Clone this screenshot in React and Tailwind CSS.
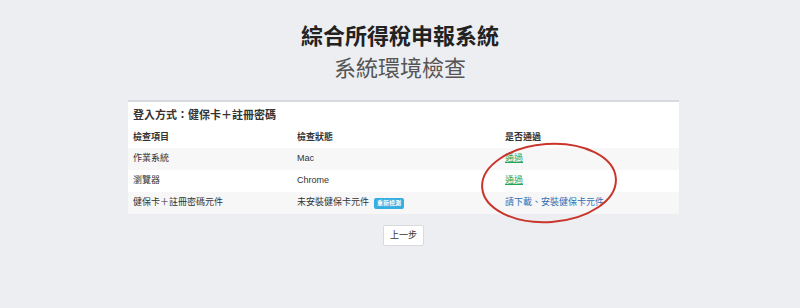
import React from 'react';

const rows = [
    { item: '作業系統', status: 'Mac', result: '通過', pass: true },
    { item: '瀏覽器', status: 'Chrome', result: '通過', pass: true },
    { item: '健保卡＋註冊密碼元件', status: '未安裝健保卡元件', result: '請下載、安裝健保卡元件', pass: false, retry: true },
];

const App = () => {
    return (
        <div className="min-h-[308px] bg-[#eceef1] pt-[21px] text-[#333] font-['Liberation_Sans','Noto_Sans_CJK_TC',sans-serif]">
            <h1 className="text-center text-[22px] font-bold leading-[32px] text-[#222]">綜合所得稅申報系統</h1>
            <h2 className="text-center text-[22px] leading-[32px] text-[#555]">系統環境檢查</h2>

            <div className="relative ml-[128px] mt-[15px] w-[551px] border-t-[2px] border-[#d6d9dd] bg-white">
                <div className="px-[5px] pt-[3px] h-[25px] text-[11px] font-semibold leading-[20px] text-[#333]">登入方式：健保卡＋註冊密碼</div>
                <div className="grid grid-cols-[164px_208px_1fr] h-[21px] items-center px-[5px] text-[9px] font-bold">
                    <div>檢查項目</div>
                    <div>檢查狀態</div>
                    <div>是否通過</div>
                </div>
                {rows.map((r, i) => (
                    <div key={i} className={`grid grid-cols-[164px_208px_1fr] h-[22px] items-center px-[5px] text-[9px] ${i % 2 === 0 ? 'bg-[#f7f7f8]' : 'bg-white'}`}>
                        <div>{r.item}</div>
                        <div className="flex items-center gap-[5px]">
                            <span>{r.status}</span>
                            {r.retry && (
                                <span className="rounded-[2px] bg-[#36aee2] px-[3px] text-[6px] font-bold leading-[11px] text-white">重新檢測</span>
                            )}
                        </div>
                        <div>
                            {r.pass ? (
                                <span className="text-[#1fa65a] underline">{r.result}</span>
                            ) : (
                                <span className="text-[#2d6fb4]">{r.result}</span>
                            )}
                        </div>
                    </div>
                ))}

                {/* red circle drawn over the result column */}
                <svg className="absolute left-[351px] top-[38px] pointer-events-none" width="140" height="86" viewBox="0 0 140 86">
                    <ellipse cx="70" cy="43" rx="67" ry="39" fill="none" stroke="#c9342b" strokeWidth="2" transform="rotate(-4 70 43)" />
                </svg>
            </div>

            <div className="mt-[11px] flex justify-center pl-[7px]">
                <button className="h-[21px] rounded-[2px] border border-[#d8dadd] bg-white px-[6px] text-[9px] text-[#333]">上一步</button>
            </div>
        </div>
    );
};

export default App;
